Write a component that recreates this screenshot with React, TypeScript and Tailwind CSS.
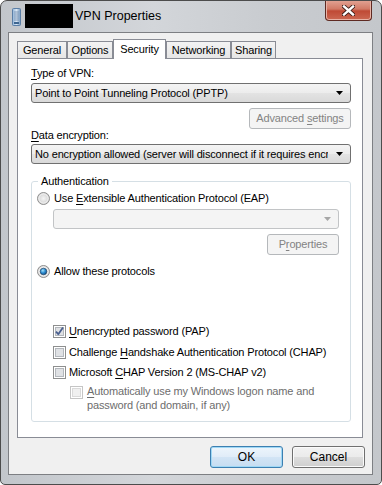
import React from "react";

const U = ({ children }: { children: React.ReactNode }) => (
  <span className="underline underline-offset-[2px] decoration-[1px]">{children}</span>
);

function Arrow({ disabled }: { disabled?: boolean }) {
  return (
    <svg width="7" height="4" viewBox="0 0 7 4" className="shrink-0">
      <path d="M0 0h7L3.5 4z" fill={disabled ? "#a6a6a6" : "#000"} />
    </svg>
  );
}

function Combo({ text, disabled, className = "" }: { text?: string; disabled?: boolean; className?: string }) {
  return (
    <div
      className={`flex h-[20px] items-center rounded-[3px] border pr-[7px] ${
        disabled
          ? "border-[#c2c4c6] bg-[#f4f4f4]"
          : "border-[#707070] bg-[linear-gradient(#f4f4f4_0%,#ececec_50%,#e3e3e3_51%,#d9d9d9_100%)]"
      } ${className}`}
    >
      <span className="mr-[8px] flex-1 overflow-hidden whitespace-nowrap pl-[3px]">{text}</span>
      <Arrow disabled={disabled} />
    </div>
  );
}

function Btn({
  children,
  variant = "normal",
  className = "",
}: {
  children: React.ReactNode;
  variant?: "normal" | "default" | "disabled";
  className?: string;
}) {
  const look =
    variant === "disabled"
      ? "border-[#b5b8bb] bg-[#f4f4f4] text-[#838383]"
      : variant === "default"
      ? "border-[#3c7fb1] bg-[linear-gradient(#edf5fc_0%,#e0ecf8_50%,#d2e4f5_51%,#c6ddf1_100%)] shadow-[inset_0_0_0_1px_#9fd8f5]"
      : "border-[#707070] bg-[linear-gradient(#f2f2f2_0%,#ebebeb_50%,#dddddd_51%,#cfcfcf_100%)] shadow-[inset_0_0_0_1px_#fbfbfb]";
  return (
    <div className={`flex items-center justify-center whitespace-nowrap rounded-[3px] border ${look} ${className}`}>
      {children}
    </div>
  );
}

function Radio({ checked }: { checked?: boolean }) {
  return (
    <svg width="13" height="13" viewBox="0 0 13 13" className="shrink-0">
      <defs>
        <radialGradient id="rg" cx="0.5" cy="0.5" r="0.6">
          <stop offset="0" stopColor="#f4f4f4" />
          <stop offset="1" stopColor="#c9c9c9" />
        </radialGradient>
        <radialGradient id="rdot" cx="0.4" cy="0.35" r="0.7">
          <stop offset="0" stopColor="#a6e3fa" />
          <stop offset="0.5" stopColor="#2e8fd4" />
          <stop offset="1" stopColor="#0e4a82" />
        </radialGradient>
      </defs>
      <circle cx="6.5" cy="6.5" r="6" fill="url(#rg)" stroke="#8f8f8f" />
      <circle cx="6.5" cy="6.5" r="4.6" fill="none" stroke="#f8f8f8" strokeWidth="0.8" />
      {checked && <circle cx="6.5" cy="6.5" r="3.3" fill="url(#rdot)" stroke="#1b3c5e" strokeWidth="0.6" />}
    </svg>
  );
}

function Check({ checked, disabled }: { checked?: boolean; disabled?: boolean }) {
  return (
    <svg width="13" height="13" viewBox="0 0 13 13" className="shrink-0">
      <rect x="0.5" y="0.5" width="12" height="12" fill="#fff" stroke={disabled ? "#c5c5c5" : "#8e8f8f"} />
      <rect
        x="2.5"
        y="2.5"
        width="8"
        height="8"
        fill={disabled ? "#f0f0f0" : "#dfe1e4"}
        stroke={disabled ? "#dadada" : "#b3b7bc"}
      />
      {checked && (
        <path d="M3 6.6l2.3 2.6L10 2.6" fill="none" stroke="#4a5f8f" strokeWidth="1.8" strokeLinejoin="round" />
      )}
    </svg>
  );
}

function Tab({ label, w, active }: { label: string; w: string; active?: boolean }) {
  return active ? (
    <div
      className={`relative z-10 -mb-[1px] flex h-[20px] ${w} items-start justify-center border border-b-0 border-[#898c95] bg-white pt-[2px]`}
    >
      {label}
    </div>
  ) : (
    <div
      className={`flex h-[17px] ${w} items-center justify-center border border-b-0 border-[#898c95] bg-[linear-gradient(#f3f3f3,#e6e6e6)] pt-[1px]`}
    >
      {label}
    </div>
  );
}

export default function App() {
  return (
    <div className="h-[485px] w-[382px] overflow-hidden rounded-t-[7px] rounded-b-[5px] border border-[#4c4c4c] bg-[linear-gradient(90deg,#c2c6cb,#d3d6da_40%,#c9ccd0_70%,#c4c7cb)] font-['Liberation_Sans',Arial,sans-serif] text-[11px] leading-[15px] tracking-[-0.15px] text-black">
      {/* title bar */}
      <div className="flex h-[31px]">
        <svg width="9" height="18" viewBox="0 0 9 18" className="ml-[11px] mt-[7px] shrink-0">
          <defs>
            <linearGradient id="ic" x1="0" x2="1">
              <stop offset="0" stopColor="#8fb2d6" />
              <stop offset="0.5" stopColor="#dbe8f5" />
              <stop offset="1" stopColor="#6e93bb" />
            </linearGradient>
          </defs>
          <rect x="0.5" y="0.5" width="8" height="17" rx="1" fill="url(#ic)" stroke="#5a7ea6" />
          <path d="M2 4h5M2 6h5M2 8h5M2 10h5M2 12h5" stroke="#6c88a8" strokeWidth="0.8" />
          <rect x="2" y="14" width="5" height="2" fill="#3e6690" />
        </svg>
        <div className="ml-[4px] mt-[3px] h-[24px] w-[48px] shrink-0 bg-black" />
        <span className="ml-[2px] mt-[8px] text-[12.5px] tracking-normal text-black">VPN Properties</span>
        <div className="flex-1" />
        <div className="-mt-[1px] mr-[9px] flex h-[21px] w-[47px] items-center justify-center rounded-b-[4px] border border-t-0 border-[#5e2a22] bg-[linear-gradient(#e3a596_0%,#d27a66_45%,#bf4a35_55%,#cc6852_100%)] shadow-[inset_0_0_0_1px_#e8b3a6]">
          <svg width="13" height="11" viewBox="0 0 13 11">
            <path d="M2 1.5l9 8M11 1.5l-9 8" stroke="#3a1c17" strokeWidth="4.2" strokeLinecap="square" />
            <path d="M2 1.5l9 8M11 1.5l-9 8" stroke="#ffffff" strokeWidth="2.4" strokeLinecap="square" />
          </svg>
        </div>
      </div>

      {/* client area */}
      <div className="ml-[7px] flex h-[443px] w-[365px] flex-col border border-[#7d7f83] bg-[#f0f0f0] pl-[8px] pt-[6px]">
        <div className="flex h-[19px] items-end">
          <Tab label="General" w="w-[50px]" />
          <Tab label="Options" w="w-[46px]" />
          <Tab label="Security" w="w-[53px]" active />
          <Tab label="Networking" w="w-[65px]" />
          <Tab label="Sharing" w="w-[45px]" />
        </div>

        <div className="flex h-[380px] w-[346px] flex-col border border-[#898c95] bg-white pl-[13px] pt-[7px]">
          <div className="flex w-[320px] flex-col">
            <div>
              <U>T</U>ype of VPN:
            </div>
            <Combo className="mt-[2px]" text="Point to Point Tunneling Protocol (PPTP)" />
            <Btn variant="disabled" className="mt-[5px] h-[21px] w-[102px] self-end">
              <span>
                Advanced <U>s</U>ettings
              </span>
            </Btn>
            <div className="leading-[12px]">
              <U>D</U>ata encryption:
            </div>
            <Combo
              className="mt-[3px]"
              text="No encryption allowed (server will disconnect if it requires encryption)"
            />

            <fieldset className="mt-[10px] h-[248px] rounded-[3px] border border-[#d5dfe5] p-0">
              <legend className="ml-[6px] px-[3px]">Authentication</legend>
              <div className="ml-[5px] mt-[1px] flex w-[302px] flex-col">
                <div className="flex h-[16px] items-center gap-[4px]">
                  <Radio />
                  <span>
                    Use <U>E</U>xtensible Authentication Protocol (EAP)
                  </span>
                </div>
                <Combo disabled className="ml-[16px] mt-[3px]" />
                <div className="mt-[5px] flex justify-end">
                  <Btn variant="disabled" className="h-[21px] w-[72px]">
                    <span>
                      P<U>r</U>operties
                    </span>
                  </Btn>
                </div>
                <div className="mt-[8px] flex h-[16px] items-center gap-[4px]">
                  <Radio checked />
                  <span>Allow these protocols</span>
                </div>

                <div className="ml-[16px] mt-[44px] flex flex-col whitespace-nowrap">
                  <div className="flex h-[16px] items-center gap-[3px]">
                    <Check checked />
                    <span>
                      <U>U</U>nencrypted password (PAP)
                    </span>
                  </div>
                  <div className="mt-[5px] flex h-[16px] items-center gap-[3px]">
                    <Check />
                    <span>
                      Challenge <U>H</U>andshake Authentication Protocol (CHAP)
                    </span>
                  </div>
                  <div className="mt-[4px] flex h-[16px] items-center gap-[3px]">
                    <Check />
                    <span>
                      Microsoft <U>C</U>HAP Version 2 (MS-CHAP v2)
                    </span>
                  </div>
                  <div className="ml-[17px] mt-[4px] flex items-start gap-[4px] text-[#6d6d6d]">
                    <div className="mt-[2px]">
                      <Check disabled />
                    </div>
                    <span className="leading-[14px]">
                      <U>A</U>utomatically use my Windows logon name and
                      <br />
                      password (and domain, if any)
                    </span>
                  </div>
                </div>
              </div>
            </fieldset>
          </div>
        </div>

        <div className="mt-[8px] flex gap-[9px] pl-[193px] text-[12px] tracking-normal">
          <Btn variant="default" className="h-[22px] w-[73px]">
            OK
          </Btn>
          <Btn className="h-[22px] w-[73px]">Cancel</Btn>
        </div>
      </div>
    </div>
  );
}
